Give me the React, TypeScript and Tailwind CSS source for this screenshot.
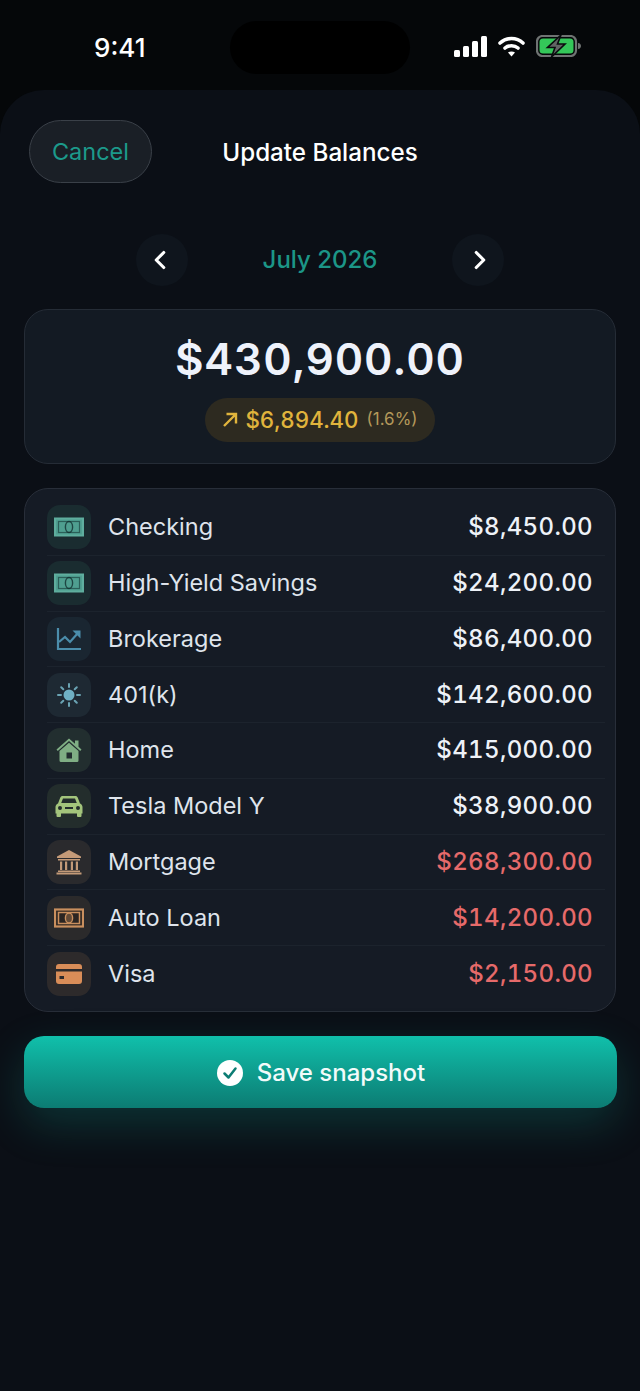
import React from 'react';
import { ChevronLeft, ChevronRight } from 'lucide-react';

const MoneyIcon = ({ color, fill }: { color: string; fill: string }) => (
  <svg width="30" height="20" viewBox="0 0 30 20">
    <rect x="1" y="1.5" width="28" height="17" fill={fill} stroke={color} strokeWidth="2" />
    <rect x="4.5" y="4.5" width="21" height="11" fill="none" stroke="#0f2a2a" strokeOpacity="0.55" strokeWidth="1.2" />
    <ellipse cx="15" cy="10" rx="3.6" ry="5.5" fill="none" stroke="#12302f" strokeOpacity="0.8" strokeWidth="1.4" />
  </svg>
);

const ChartIcon = () => (
  <svg width="26" height="24" viewBox="0 0 26 24" fill="none" stroke="#4b8dab" strokeWidth="2.200">
    <path d="M2 1v21h23" />
    <path d="M3 15l6-5 5 5 8-9" />
    <path d="M16.500 3.500h8v8z" fill="#4b8dab" stroke="none" />
  </svg>
);

const SunIcon = () => (
  <svg width="26" height="26" viewBox="0 0 26 26" stroke="#6aa3b3" strokeWidth="2" strokeLinecap="round">
    <circle cx="13" cy="13" r="5.500" fill="#6fb0c4" stroke="none" />
    <path d="M13 2v3M13 21v3M2 13h3M21 13h3M5.200 5.200l2.100 2.100M18.700 18.700l2.100 2.100M5.200 20.800l2.100-2.100M18.700 7.300l2.100-2.100" />
  </svg>
);

const HomeIcon = () => (
  <svg width="28" height="26" viewBox="0 0 28 26">
    <path d="M1.500 12.500L14 1.500l6 5.200V3.500h3.500v6.300l3 2.700-1.300 1.400L14 4 2.800 13.900z" fill="#7fae84" />
    <path fillRule="evenodd" d="M4.500 14L14 5.800 23.500 14v9.500a1.500 1.500 0 0 1-1.500 1.500H6a1.500 1.500 0 0 1-1.500-1.500zM11.500 15.500v6h5.500v-6z" fill="#7fae84" />
  </svg>
);

const CarIcon = () => (
  <svg width="28" height="22" viewBox="0 0 28 22">
    <path
      fillRule="evenodd"
      d="M7.500 1h13c1 0 1.800.6 2.200 1.500L25 8.500c1.500.6 2.500 2 2.500 3.500v6.500h-1V21a1 1 0 0 1-1 1h-2.500a1 1 0 0 1-1-1v-2.500H6V21a1 1 0 0 1-1 1H2.500a1 1 0 0 1-1-1v-2.500h-1V12c0-1.500 1-2.900 2.500-3.500l2.300-6C5.700 1.600 6.500 1 7.500 1zM8 3.500L6.200 8h15.600L20 3.500zM5 11a2 2 0 1 0 0 4 2 2 0 0 0 0-4zm18 0a2 2 0 1 0 0 4 2 2 0 0 0 0-4zM10 12v2h8v-2z"
      fill="#a3c47c"
    />
  </svg>
);

const BankIcon = () => (
  <svg width="26" height="26" viewBox="0 0 26 26" fill="#c49a78">
    <path d="M13 1L25 7.500V9H1V7.500z" />
    <rect x="2" y="10" width="22" height="1.500" />
    <rect x="4" y="12.500" width="2.200" height="8.500" />
    <rect x="9" y="12.500" width="2.200" height="8.500" />
    <rect x="14.800" y="12.500" width="2.200" height="8.500" />
    <rect x="19.800" y="12.500" width="2.200" height="8.500" />
    <rect x="2" y="21.500" width="22" height="1.500" />
    <rect x="0.500" y="23.500" width="25" height="2" />
  </svg>
);

const LoanIcon = () => (
  <svg width="30" height="20" viewBox="0 0 30 20">
    <rect x="1" y="1.500" width="28" height="17" fill="#2b2522" stroke="#c98f5e" strokeWidth="2.200" />
    <rect x="4.500" y="4.500" width="21" height="11" fill="none" stroke="#c98f5e" strokeWidth="1.500" />
    <ellipse cx="15" cy="10" rx="3.600" ry="5" fill="#c98f5e" fillOpacity="0.35" stroke="#c98f5e" strokeWidth="1.400" />
  </svg>
);

const CardIcon = () => (
  <svg width="26" height="20" viewBox="0 0 26 20">
    <path d="M3 0h20a3 3 0 0 1 3 3v2H0V3a3 3 0 0 1 3-3z" fill="#d98d58" />
    <path d="M0 7.500h26V17a3 3 0 0 1-3 3H3a3 3 0 0 1-3-3zM3.500 12v3H8v-3z" fill="#d98d58" fillRule="evenodd" />
  </svg>
);

const rows = [
  { name: 'Checking', value: '$8,450.00', bg: 'bg-[#1a2c30]', icon: <MoneyIcon color="#5fae9e" fill="#4f9f90" /> },
  { name: 'High-Yield Savings', value: '$24,200.00', bg: 'bg-[#1a2c30]', icon: <MoneyIcon color="#5fae9e" fill="#4f9f90" /> },
  { name: 'Brokerage', value: '$86,400.00', bg: 'bg-[#1a2631]', icon: <ChartIcon /> },
  { name: '401(k)', value: '$142,600.00', bg: 'bg-[#1e2933]', icon: <SunIcon /> },
  { name: 'Home', value: '$415,000.00', bg: 'bg-[#222e2f]', icon: <HomeIcon /> },
  { name: 'Tesla Model Y', value: '$38,900.00', bg: 'bg-[#232d2c]', icon: <CarIcon /> },
  { name: 'Mortgage', value: '$268,300.00', red: true, bg: 'bg-[#2a2a2d]', icon: <BankIcon /> },
  { name: 'Auto Loan', value: '$14,200.00', red: true, bg: 'bg-[#2b2a2b]', icon: <LoanIcon /> },
  { name: 'Visa', value: '$2,150.00', red: true, bg: 'bg-[#2d2a2b]', icon: <CardIcon /> },
];

export default function App() {
  return (
    <div className="w-[640px] h-[1391px] overflow-hidden bg-[#050709] font-['Inter',sans-serif]">
      {/* status bar */}
      <div className="h-[90px] relative flex items-start justify-between pl-[94px] pr-[58px] pt-[33px]">
        <span className="text-[26px] leading-[30px] font-medium text-white">9:41</span>
        <div className="absolute left-[230px] top-[21px] w-[180px] h-[53px] rounded-full bg-black" />
        <div className="flex items-center gap-[11px] pt-[2px]">
          <svg width="33" height="21" viewBox="1 0 33 21" fill="#fff">
            <rect x="1" y="14" width="6" height="7" rx="1.500" />
            <rect x="10" y="10" width="6" height="11" rx="1.500" />
            <rect x="19" y="5" width="6" height="16" rx="1.500" />
            <rect x="28" y="0" width="6" height="21" rx="1.500" />
          </svg>
          <svg width="27" height="21" viewBox="0 0 27 21" fill="none" stroke="#fff" strokeWidth="3.600" strokeLinecap="round">
            <path d="M2 7c6.500-6 16.500-6 23 0" />
            <path d="M7 12c3.500-3 9.500-3 13 0" />
            <path d="M13.500 20.500l-3.500-4c1.800-1.300 5.200-1.300 7 0z" fill="#fff" stroke="none" />
          </svg>
          <svg width="46" height="22" viewBox="0 0 46 22">
            <rect x="1" y="1" width="39" height="20" rx="5.500" fill="none" stroke="#6f7372" strokeWidth="2.200" />
            <rect x="3.500" y="3.500" width="34" height="15" rx="3.500" fill="#34c759" />
            <path d="M42 8c2 0 3 1.500 3 3s-1 3-3 3z" fill="#6f7372" />
            <path d="M25 0L11.500 12.500h7.500L15.500 22 29 9h-7.500z" fill="#616564" stroke="#0a0c0e" strokeWidth="1.600" />
          </svg>
        </div>
      </div>

      {/* sheet */}
      <div className="h-[1301px] rounded-t-[44px] bg-[#0b0f16] px-[24px]">
        <div className="relative h-[123px] flex items-start justify-center pt-[47px]">
          <button className="absolute left-[5px] top-[30px] w-[123px] h-[63px] rounded-[32px] border border-[#3a4048] bg-[#1a1f26] text-[23.500px] text-[#1c9a8b]">
            Cancel
          </button>
          <span className="text-[24.200px] leading-[32px] font-medium text-white">Update Balances</span>
        </div>

        <div className="mt-[21px] flex items-center justify-center h-[52px]">
          <div className="w-[52px] h-[52px] rounded-full bg-[#0f151d] flex items-center justify-center text-white pr-[5px]">
            <ChevronLeft size={30} strokeWidth={2.500} />
          </div>
          <span className="w-[264px] text-center text-[24px] font-medium text-[#1c9687]">July 2026</span>
          <div className="w-[52px] h-[52px] rounded-full bg-[#0f151d] flex items-center justify-center text-white pl-[3px]">
            <ChevronRight size={30} strokeWidth={2.500} />
          </div>
        </div>

        <div className="mt-[23px] h-[155px] rounded-[24px] border border-[#252c36] bg-[#131a23] flex flex-col items-center pt-[20px]">
          <div className="text-[44px] leading-[58px] font-semibold tabular-nums tracking-[0.9px] text-[#eef2fb]">$430,900.00</div>
          <div className="mt-[10px] h-[44px] w-[230px] rounded-full bg-[#2d2a20] flex items-center justify-center text-[#e0b43c]">
            <svg width="16" height="16" viewBox="0 0 16 16" fill="none" stroke="#e0b43c" strokeWidth="2.400" className="mr-[7px]">
              <path d="M2 14L14 2M4.500 2H14v9.500" />
            </svg>
            <span className="text-[22.300px] font-medium tabular-nums">$6,894.40</span>
            <span className="ml-[8px] text-[17px] text-[#b3985a]">(1.6%)</span>
          </div>
        </div>

        <div className="mt-[24px] h-[524px] rounded-[24px] border border-[#282e39] bg-[#151b25] pl-[22px] pr-[10px] pt-[11px]">
          {rows.map((r, i) => (
            <div key={r.name} className={`h-[55.750px] flex items-center pr-[12px] ${i < rows.length - 1 ? 'border-b border-[#1c232d]' : ''}`}>
              <div className={`w-[44px] h-[44px] rounded-[13px] flex items-center justify-center ${r.bg}`}>{r.icon}</div>
              <span className="ml-[17px] text-[23.500px] leading-[32px] text-[#dfe4ec]">{r.name}</span>
              <span className={`ml-auto text-[24px] leading-[32px] font-[450] tabular-nums tracking-[0.35px] ${r.red ? 'text-[#e66a6a]' : 'text-[#eef2f8]'}`}>{r.value}</span>
            </div>
          ))}
        </div>

        <button className="mt-[24px] w-[593px] h-[72px] rounded-[20px] bg-gradient-to-b from-[#10c0ab] to-[#0c7c73] shadow-[0_16px_44px_rgba(20,184,166,0.22)] flex items-center justify-center gap-[14px] pt-[1px] pl-[1px]">
          <svg width="26" height="26" viewBox="0 0 26 26">
            <circle cx="13" cy="13" r="13" fill="#fff" />
            <path d="M7.500 13.500l4 4 7-9" fill="none" stroke="#0c7c73" strokeWidth="2.500" strokeLinecap="round" strokeLinejoin="round" />
          </svg>
          <span className="text-[24px] font-medium text-[#f2fbfa]">Save snapshot</span>
        </button>
      </div>
    </div>
  );
}
